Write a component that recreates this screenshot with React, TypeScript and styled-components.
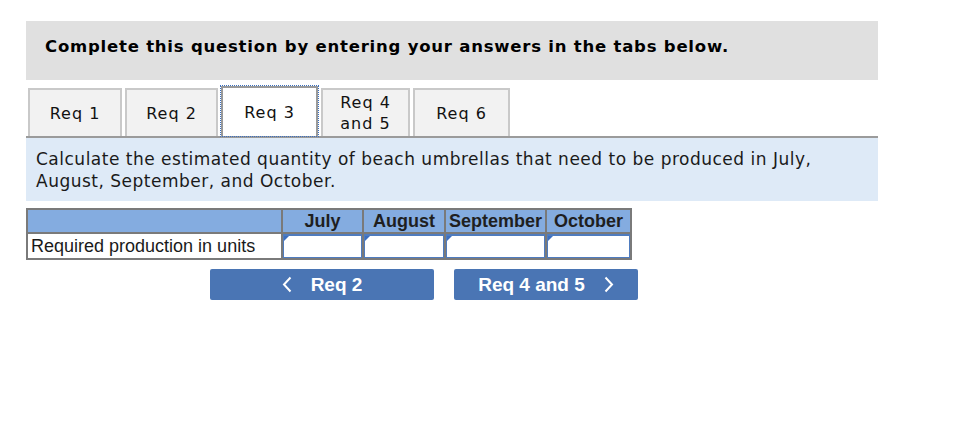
import React from 'react';
import styled, { createGlobalStyle } from 'styled-components';

const GlobalStyle = createGlobalStyle`
  html, body {
    margin: 0;
    padding: 0;
    background: #ffffff;
  }
  body {
    font-family: "DejaVu Sans", Verdana, sans-serif;
    color: #1a1a1a;
  }
`;

const Page = styled.div`
  width: 852px;
  padding: 21px 0 0 26px;
`;

const Banner = styled.div`
  height: 59px;
  box-sizing: border-box;
  padding: 16px 0 0 19px;
  background: #e0e0e0;
  font-family: "DejaVu Sans", Verdana, sans-serif;
  font-weight: bold;
  font-size: 16.5px;
  letter-spacing: 0.78px;
  color: #000;
`;

const TabBar = styled.div`
  display: flex;
  align-items: flex-end;
  gap: 3px;
  margin-top: 6px;
  padding-left: 2px;
  border-bottom: 2px solid #9b9b9b;
`;

const Tab = styled.div<{ $w: number; $active?: boolean }>`
  width: ${(p) => p.$w}px;
  height: ${(p) => (p.$active ? 50 : 48)}px;
  box-sizing: border-box;
  display: flex;
  align-items: center;
  justify-content: center;
  text-align: center;
  font-size: 16px;
  letter-spacing: 1px;
  line-height: 21px;
  color: #111;
  background: ${(p) => (p.$active ? '#ffffff' : '#f2f2f2')};
  border: 2px solid ${(p) => (p.$active ? '#999999' : '#c9c9c9')};
  border-bottom: none;
  outline: ${(p) => (p.$active ? '1px dotted #3a6fc0' : 'none')};
  outline-offset: 0;
`;

const Prompt = styled.div`
  background: #deeaf7;
  padding: 10px 10px 9px 10px;
  font-size: 17px;
  letter-spacing: 0.5px;
  line-height: 22px;
  color: #1a1a1a;
`;

const Grid = styled.table`
  margin-top: 7px;
  border-collapse: collapse;
  font-family: "Liberation Sans", Arial, sans-serif;
  font-size: 18px;
`;

const HeadCell = styled.th<{ $w: number }>`
  width: ${(p) => p.$w}px;
  height: 22px;
  padding: 0;
  background: #84ace0;
  border: 2px solid #7a7a7a;
  font-weight: bold;
  color: #1f1f1f;
  text-align: center;
  line-height: 20px;
`;

const LabelCell = styled.td`
  height: 24px;
  padding: 0 3px;
  border: 2px solid #7a7a7a;
  text-align: left;
  color: #1a1a1a;
  white-space: nowrap;
  line-height: 20px;
`;

const InputCell = styled.td`
  padding: 0;
  border: 2px solid #7a7a7a;
  background: #fff;
`;

const Entry = styled.div`
  position: relative;
  height: 24px;
  box-sizing: border-box;
  border: 1px solid #4f7cbf;
  border-top-width: 2px;
  background: #fff;
  &::before {
    content: '';
    position: absolute;
    left: 0;
    top: 0;
    border-top: 5px solid #3c6fc0;
    border-right: 5px solid transparent;
  }
`;

const NavRow = styled.div`
  display: flex;
  gap: 20px;
  margin-top: 9px;
  padding-left: 184px;
`;

const NavButton = styled.div<{ $w: number }>`
  width: ${(p) => p.$w}px;
  height: 31px;
  display: flex;
  align-items: center;
  justify-content: center;
  gap: 19px;
  background: #4a75b4;
  border-radius: 2px;
  color: #fff;
  font-family: "Liberation Sans", Arial, sans-serif;
  font-weight: bold;
  font-size: 19px;
`;

const Chevron = ({ dir }: { dir: 'left' | 'right' }) => (
  <svg width="10" height="17" viewBox="0 0 10 17">
    <path
      d={dir === 'left' ? 'M8.5 1.5 L2 8.5 L8.5 15.5' : 'M1.5 1.5 L8 8.5 L1.5 15.5'}
      fill="none"
      stroke="#fff"
      strokeWidth="2"
    />
  </svg>
);

const tabs = [
  { label: 'Req 1', w: 94 },
  { label: 'Req 2', w: 93 },
  { label: 'Req 3', w: 97, active: true },
  { label: 'Req 4\nand 5', w: 89 },
  { label: 'Req 6', w: 97 },
];

const months = [
  { name: 'July', w: 79 },
  { name: 'August', w: 80 },
  { name: 'September', w: 99 },
  { name: 'October', w: 83 },
];

export default function App() {
  return (
    <Page>
      <GlobalStyle />
      <Banner>Complete this question by entering your answers in the tabs below.</Banner>
      <TabBar>
        {tabs.map((t) => (
          <Tab key={t.label} $w={t.w} $active={t.active}>
            <span style={{ whiteSpace: 'pre-line' }}>{t.label}</span>
          </Tab>
        ))}
      </TabBar>
      <Prompt>
        Calculate the estimated quantity of beach umbrellas that need to be produced in July,
        <br />
        August, September, and October.
      </Prompt>
      <Grid>
        <thead>
          <tr>
            <HeadCell $w={253} />
            {months.map((m) => (
              <HeadCell key={m.name} $w={m.w}>
                {m.name}
              </HeadCell>
            ))}
          </tr>
        </thead>
        <tbody>
          <tr>
            <LabelCell>Required production in units</LabelCell>
            {months.map((m) => (
              <InputCell key={m.name}>
                <Entry />
              </InputCell>
            ))}
          </tr>
        </tbody>
      </Grid>
      <NavRow>
        <NavButton $w={224}>
          <Chevron dir="left" />
          <span>Req 2</span>
        </NavButton>
        <NavButton $w={184}>
          <span>Req 4 and 5</span>
          <Chevron dir="right" />
        </NavButton>
      </NavRow>
    </Page>
  );
}
